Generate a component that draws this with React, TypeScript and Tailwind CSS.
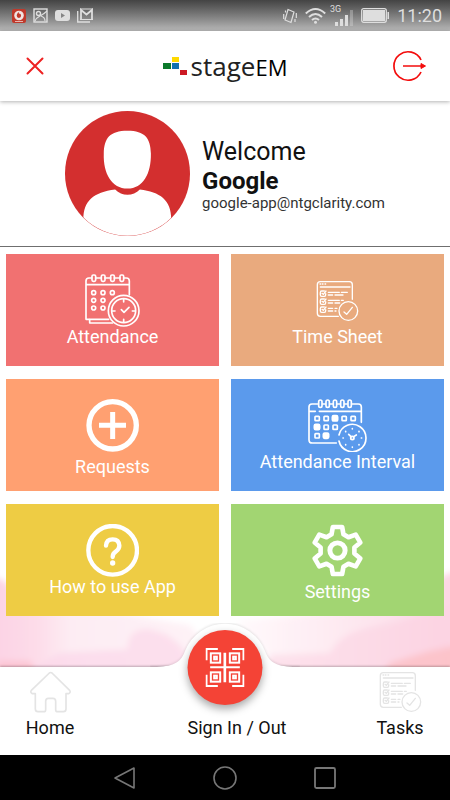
import type { ReactNode } from "react";

const stroke = {
  fill: "none",
  stroke: "currentColor",
  strokeLinecap: "round" as const,
  strokeLinejoin: "round" as const,
};

function AttendanceIcon() {
  return (
    <svg className="h-[53px] w-[55px]" viewBox="255 71 165 159" {...stroke} strokeWidth={5}>
      <path d="M326 207H258V92q0-9 9-9h8M287 83h17M315 83h17M343 83h17M371 83h8q9 0 9 9V133M258 103H388" />
      <path d="M269 208v10H338" />
      {[281, 309, 337, 365].map((x) => (
        <rect key={x} x={x - 5} y={74} width={11} height={19} rx={4} />
      ))}
      {[[281, 127], [309, 127], [337, 127], [281, 150], [309, 150], [281, 173], [309, 173]].map(([x, y]) => (
        <circle key={`${x}-${y}`} cx={x} cy={y} r={6} />
      ))}
      <circle cx={371} cy={181} r={46} />
      <circle cx={371} cy={181} r={36} />
      <path d="M371 147v8M371 207v8M337 182h8M397 182h8M364 178l8 8 15-15" />
    </svg>
  );
}

function SheetIcon() {
  return (
    <svg className="h-[42px] w-[43px]" viewBox="273 87 129 126" {...stroke} strokeWidth={4}>
      <path d="M340 196H286q-9 0-9-9V101q0-9 9-9H373q9 0 9 9V145" />
      <path d="M285 99h2M292 99h2M300 99h2M286 108H375" />
      {[127, 151, 175].map((y) => (
        <g key={y}>
          <path d={`M298 ${y - 7}H290q-4 0-4 5v6q0 5 4 5h8q4 0 4-5v-3`} />
          <path d={`M291 ${y}l4 3 8-10`} />
        </g>
      ))}
      <path d="M310 124h33M349 124h18M310 132h13M330 132h24M310 148h33M349 148h6M310 156h13M330 156h14M310 172h13M330 172h6M310 180h13M330 180h3" />
      <circle cx={370} cy={180} r={28} />
      <path d="M357 183l8 7 17-21" />
    </svg>
  );
}

function PlusIcon() {
  return (
    <svg className="h-[53px] w-[53px]" viewBox="258 85 159 159" fill="none" stroke="currentColor">
      <circle cx={338} cy={164} r={71} strokeWidth={16} />
      <path d="M297 164H378M338 124V205" strokeWidth={15} />
    </svg>
  );
}

function IntervalIcon() {
  const days = [[276, 143], [303, 143], [330, 143, 1], [357, 143], [384, 143], [276, 169, 1], [303, 169], [330, 169], [276, 195], [303, 195, 1]];
  return (
    <svg className="h-[53px] w-[59px]" viewBox="249 85 177 159" {...stroke} strokeWidth={5}>
      <path d="M334 217H262q-10 0-10-10V109q0-9 9-9h17M293 100h8M315 100h8M337 100h8M359 100h8M381 100h19q9 0 9 9V155M254 122h17M283 122H409" />
      {[286, 308, 330, 352, 374].map((x) => (
        <rect key={x} x={x - 5} y={88} width={10} height={22} rx={5} />
      ))}
      {days.map(([x, y, full]) => (
        <rect
          key={`${x}-${y}`}
          x={full ? x - 8 : x - 6}
          y={full ? y - 8 : y - 6}
          width={full ? 16 : 13}
          height={full ? 16 : 13}
          rx={full ? 4 : 2}
          fill={full ? "currentColor" : "none"}
        />
      ))}
      <path d="M342 193A41 41 0 1 1 342 211" />
      <circle cx={382} cy={202} r={5} />
      <path d="M378 198l-7-7M386 198l8-5M382 174v1M382 229v1M354 202h1M409 202h1M362 182v1M402 182v1M362 222v1M402 222v1" />
    </svg>
  );
}

function HelpIcon() {
  return (
    <svg className="h-[53px] w-[53px]" viewBox="258 85 159 159" {...stroke} strokeWidth={13}>
      <circle cx={338} cy={164} r={73} />
      <path d="M318 150q1-19 20-19t20 19c0 9-5 13-11 18-6 4-9 7-9 16" />
      <circle cx={338} cy={202} r={8} fill="currentColor" stroke="none" />
    </svg>
  );
}

function GearIcon() {
  return (
    <svg className="h-[53px] w-[53px]" viewBox="-80 -80 160 160" fill="none" stroke="currentColor" strokeLinejoin="round">
      <path
        strokeWidth={14}
        d="M-14-71H14L18-49 33-40 55-48 69-24 51-9V9L69 24 55 48 33 40 18 49 14 71H-14L-18 49-33 40-55 48-69 24-51 9V-9L-69-24-55-48-33-40-18-49Z"
      />
      <circle r={23} strokeWidth={15} />
    </svg>
  );
}

function HomeIcon() {
  return (
    <svg className="h-[42px] w-[43px]" viewBox="85 184 129 126" {...stroke} strokeWidth={5}>
      <path d="M146 190L92 242q-4 7 3 10h9V298q0 8 8 8h17q6 0 6-6V275q0-9 8-9h14q8 0 8 9v25q0 6 6 6h17q8 0 8-8V252h8q7-3 3-10L154 190q-4-3-8 0Z" />
    </svg>
  );
}

function QrIcon() {
  return (
    <svg className="h-[39px] w-[39px]" viewBox="0 0 117 117" fill="none" stroke="currentColor" strokeWidth={6}>
      <path d="M3 37V3H37M80 3h34V37M114 80v34H80M37 114H3V80" />
      <path d="M58 14V103" strokeWidth={8} />
      <path d="M14 58H103" />
      {[[16, 16], [73, 16], [16, 73], [73, 73]].map(([x, y]) => (
        <g key={`${x}-${y}`}>
          <rect x={x} y={y} width={28} height={28} />
          <rect x={x + 10} y={y + 10} width={8} height={8} />
        </g>
      ))}
    </svg>
  );
}

function StatusBar() {
  return (
    <div className="flex h-[31px] items-center bg-linear-to-b from-[#444444] to-[#b9b9b9] px-2 pl-3 text-[#dedede]">
      <div className="flex flex-1 items-center gap-[7px]">
        <svg className="h-[14px] w-[14px]" viewBox="0 0 14 14">
          <rect width={14} height={14} rx={2} fill="#c0392b" />
          <circle cx={7} cy={6.5} r={4.8} fill="#f1e4e2" />
          <path d="M9 2C6.5 2.5 6.5 4 7 4.500a2.200 2.200 0 1 1-2.300 2.300C4.700 4.500 6.500 2.500 9 2Z" fill="#c0392b" />
          <path d="M3 12.500h8" stroke="#e5b5b0" />
        </svg>
        <svg className="h-[15px] w-[15px]" viewBox="0 0 15 15" fill="none" stroke="currentColor" strokeWidth={1.4}>
          <rect x={1} y={1} width={13} height={13} />
          <circle cx={5.5} cy={5.5} r={2} />
          <path d="M2 13c1-3 3-4 5-5s4-2 7-5M8 8c3 1 4 3 4 5" strokeWidth={1.1} />
        </svg>
        <svg className="h-[15px] w-[15px]" viewBox="0 0 15 15">
          <rect y={2} width={15} height={11} rx={3} fill="currentColor" />
          <path d="M6 5l4 2.500-4 2.500Z" fill="#858585" />
        </svg>
        <svg className="h-[15px] w-[16px]" viewBox="0 0 16 15" fill="none" stroke="currentColor">
          <path d="M.7 3v11H13" strokeWidth={1.3} />
          <path d="M4 11V2l5.500 4.500L15 2V11" strokeWidth={1.8} />
          <path d="M3 1h13M3 11.500h13" />
        </svg>
      </div>
      <svg className="mr-2 h-[16px] w-[14px]" viewBox="0 0 14 16" fill="none" stroke="currentColor" strokeWidth={1.2}>
        <path d="M5 1.500l6 2.500-3 10.500-6-2.500ZM.7 6v5M13.300 5v5M12 11v3M2.500 2.500v2" />
      </svg>
      <svg className="mr-1 h-[17px] w-[21px]" viewBox="0 0 21 17" fill="none" stroke="currentColor" strokeWidth={2}>
        <path d="M.8 6.500q9.700-9 19.400 0M4 10q6.500-6 13 0M7 13q3.500-3 7 0" />
        <circle cx={10.5} cy={15.3} r={1.5} fill="currentColor" stroke="none" />
      </svg>
      <div className="mr-2 flex h-[21px] flex-none items-end">
        <span className="self-start text-[9px] leading-[9px]">3G</span>
        <svg className="-ml-[6px] h-[16px] w-[18px]" viewBox="0 0 18 16" fill="currentColor">
          <path d="M0 12h3v4H0ZM5 9h3v7H5ZM10 5h3v11h-3Z" />
          <path d="M15 0h3v16h-3Z" opacity={0.35} />
        </svg>
      </div>
      <svg className="mr-2 h-[15px] w-[28px]" viewBox="0 0 28 15">
        <rect x={0.7} y={0.7} width={24.6} height={13.6} rx={2} fill="none" stroke="currentColor" strokeWidth={1.3} />
        <rect x={2} y={2} width={22} height={11} fill="currentColor" />
        <path d="M26.500 4h1.500v7h-1.500Z" fill="currentColor" />
      </svg>
      <span className="text-[18px] leading-6">11:20</span>
    </div>
  );
}

function Header() {
  return (
    <header className="relative z-10 grid h-[70px] grid-cols-[1fr_auto_1fr] items-center bg-white px-6 shadow-[0_1px_4px_rgba(0,0,0,0.3)]">
      <button type="button" aria-label="Close" className="h-[22px] w-[22px] justify-self-start text-[#ee2222]">
        <svg viewBox="0 0 22 22" fill="none" stroke="currentColor" strokeWidth={2} strokeLinecap="round">
          <path d="M3.500 3.500l15 15M18.500 3.500l-15 15" />
        </svg>
      </button>
      <div className="flex items-center gap-1">
        <svg className="h-[20px] w-[24px]" viewBox="0 0 24 20">
          <path fill="#0b7a2b" d="M0 7h8v6H0Z" />
          <path fill="#ffd900" d="M9 1h7v5H9Z" />
          <path fill="#1272b0" d="M9 7h7v6H9Z" />
          <path fill="#cc1a24" d="M17 14h7v5h-7Z" />
        </svg>
        <h1 className="font-['Open_Sans'] text-[26px] leading-8 text-[#222222]">
          stage<span className="text-[22px] text-black">EM</span>
        </h1>
      </div>
      <button type="button" aria-label="Log out" className="h-[34px] w-[34px] justify-self-end text-[#f30d0d]">
        <svg viewBox="0 0 34 34" fill="none" stroke="currentColor" strokeWidth={1.7}>
          <path d="M29 11A14.200 14.200 0 1 0 29 23M11 17h18" />
          <path d="M29 14.500l4.500 2.500-4.500 2.500Z" fill="currentColor" strokeWidth={1} />
        </svg>
      </button>
    </header>
  );
}

function Profile() {
  return (
    <section className="flex h-[146px] justify-center border-b border-[#6f6f6f] bg-white pt-[10px]">
      <svg className="h-[125px] w-[125px]" viewBox="44 34 374 374" role="img" aria-label="Profile picture">
        <defs>
          <clipPath id="avatar">
            <circle cx={231} cy={221} r={186.5} />
          </clipPath>
        </defs>
        <circle cx={231} cy={221} r={187} fill="#d32f2f" />
        <g fill="#fff" clipPath="url(#avatar)">
          <path d="M231 93c52 0 69 22 70 68 1 60-23 105-70 105s-73-45-71-105c1-46 18-68 71-68Z" />
          <path d="M194 269c20 21 54 21 74 0 60 8 94 30 94 90v60H99v-60c0-56 30-82 95-90Z" />
        </g>
      </svg>
      <div className="ml-3 pt-[26px] text-[#111111]">
        <p className="text-[25px] leading-[30px]">Welcome</p>
        <p className="text-[24px] leading-7 font-bold">Google</p>
        <p className="text-[15px] leading-4 text-[#333333]">google-app@ntgclarity.com</p>
      </div>
    </section>
  );
}

function Tile({ color, label, icon, spaced }: { color: string; label: string; icon: ReactNode; spaced?: boolean }) {
  return (
    <button type="button" className={`flex h-[112px] flex-col items-center pt-5 text-white ${color}`}>
      <span className="flex h-[53px] items-center">{icon}</span>
      <span className={`text-[18px] leading-5 ${spaced ? "mt-[5px]" : ""}`}>{label}</span>
    </button>
  );
}

// pink watercolor wash behind the last row of tiles
function Watercolor() {
  return (
    <svg className="absolute inset-x-0 bottom-0 h-[100px] w-full" viewBox="0 0 450 100" preserveAspectRatio="none">
      <defs>
        <filter id="soft" x="-10%" y="-20%" width="120%" height="140%">
          <feGaussianBlur stdDeviation="3" />
        </filter>
        <linearGradient id="left" x1="0" x2="1">
          <stop offset="0" stopColor="#fccfe3" />
          <stop offset="0.25" stopColor="#fddce9" />
          <stop offset="0.4" stopColor="#fdecf3" />
          <stop offset="1" stopColor="#fef3f7" />
        </linearGradient>
        <linearGradient id="right" x1="1" x2="0">
          <stop offset="0" stopColor="#fcd2e2" />
          <stop offset="0.35" stopColor="#fde2ec" />
          <stop offset="1" stopColor="#fffafc" />
        </linearGradient>
      </defs>
      <g filter="url(#soft)">
        <path d="M-20 4L4 14 40 44 120 46 190 58 205 78V120H-20Z" fill="url(#left)" />
        <path d="M128 82C126 66 140 58 156 64C172 68 182 78 190 92L180 110H20L60 86Z" fill="#fbd3e7" opacity={0.6} />
        <path d="M470 0L444 8 400 40 320 46 236 54 262 78 280 120H470Z" fill="url(#right)" />
        <path d="M330 86C344 60 370 62 400 54L450 40V110H262L270 88Z" fill="#fccfe0" opacity={0.5} />
        <path d="M390 96L430 84 470 76V110H380Z" fill="#fbbfc4" opacity={0.8} />
        <path d="M0 94L30 94 40 110H-10Z" fill="#fcbdca" opacity={0.7} />
      </g>
    </svg>
  );
}

function BottomNav() {
  const item = "flex flex-col items-center gap-1 pt-1 text-[18px] leading-[22px] text-[#111111]";
  return (
    <nav className="relative grid h-[88px] grid-cols-[100px_1fr_100px] bg-white shadow-[0_-1px_2px_rgba(0,0,0,0.25)]">
      <svg className="absolute -top-[44px] left-1/2 h-[50px] w-[150px] -translate-x-1/2" viewBox="0 0 150 50">
        <path
          d="M0 44C20 44 30 42 35 28A43 43 0 0 1 115 28C120 42 130 44 150 44V50H0Z"
          fill="#fff"
          className="drop-shadow-[0_-1px_1px_rgba(0,0,0,0.1)]"
        />
      </svg>
      <a href="#home" className={item}>
        <span className="text-[#e4e4e4]"><HomeIcon /></span>
        Home
      </a>
      <a href="#sign" className={`${item} justify-end pb-4 pl-6`}>Sign In / Out</a>
      <a href="#tasks" className={item}>
        <span className="text-[#e4e4e4]"><SheetIcon /></span>
        Tasks
      </a>
      <button
        type="button"
        aria-label="Scan QR code"
        className="absolute -top-[37px] left-1/2 flex h-[75px] w-[75px] -translate-x-1/2 items-center justify-center rounded-full bg-[#f44336] text-white shadow-[0_4px_8px_rgba(0,0,0,0.35)]"
      >
        <QrIcon />
      </button>
    </nav>
  );
}

function SystemNav() {
  return (
    <div className="flex h-[45px] items-center justify-center gap-[76px] bg-black text-[#777777]">
      <button type="button" aria-label="Back">
        <svg className="h-6 w-6" viewBox="0 0 24 24" fill="none" stroke="currentColor" strokeWidth={1.6} strokeLinejoin="round">
          <path d="M21 2V22L2 12Z" />
        </svg>
      </button>
      <button type="button" aria-label="Overview">
        <svg className="h-6 w-6" viewBox="0 0 24 24" fill="none" stroke="currentColor" strokeWidth={1.6}>
          <circle cx={12} cy={12} r={11} />
        </svg>
      </button>
      <button type="button" aria-label="Recent apps">
        <svg className="h-6 w-6" viewBox="0 0 24 24" fill="none" stroke="currentColor" strokeWidth={1.8}>
          <rect x={2} y={2} width={20} height={20} rx={1.5} />
        </svg>
      </button>
    </div>
  );
}

export default function App() {
  return (
    <div className="flex min-h-screen flex-col bg-white font-[Roboto,sans-serif]">
      <StatusBar />
      <Header />
      <Profile />
      <main className="relative flex-1">
        <Watercolor />
        <div className="relative grid grid-cols-2 gap-x-3 gap-y-[13px] px-[6px] pt-[7px] pb-[51px]">
          <Tile color="bg-[#f17171]" label="Attendance" icon={<AttendanceIcon />} />
          <Tile color="bg-[#e9aa7e]" label="Time Sheet" icon={<SheetIcon />} />
          <Tile color="bg-[#ffa071]" label="Requests" icon={<PlusIcon />} spaced />
          <Tile color="bg-[#5b9aec]" label="Attendance Interval" icon={<IntervalIcon />} />
          <Tile color="bg-[#eecc44]" label="How to use App" icon={<HelpIcon />} />
          <Tile color="bg-[#a2d572]" label="Settings" icon={<GearIcon />} spaced />
        </div>
      </main>
      <BottomNav />
      <SystemNav />
    </div>
  );
}
